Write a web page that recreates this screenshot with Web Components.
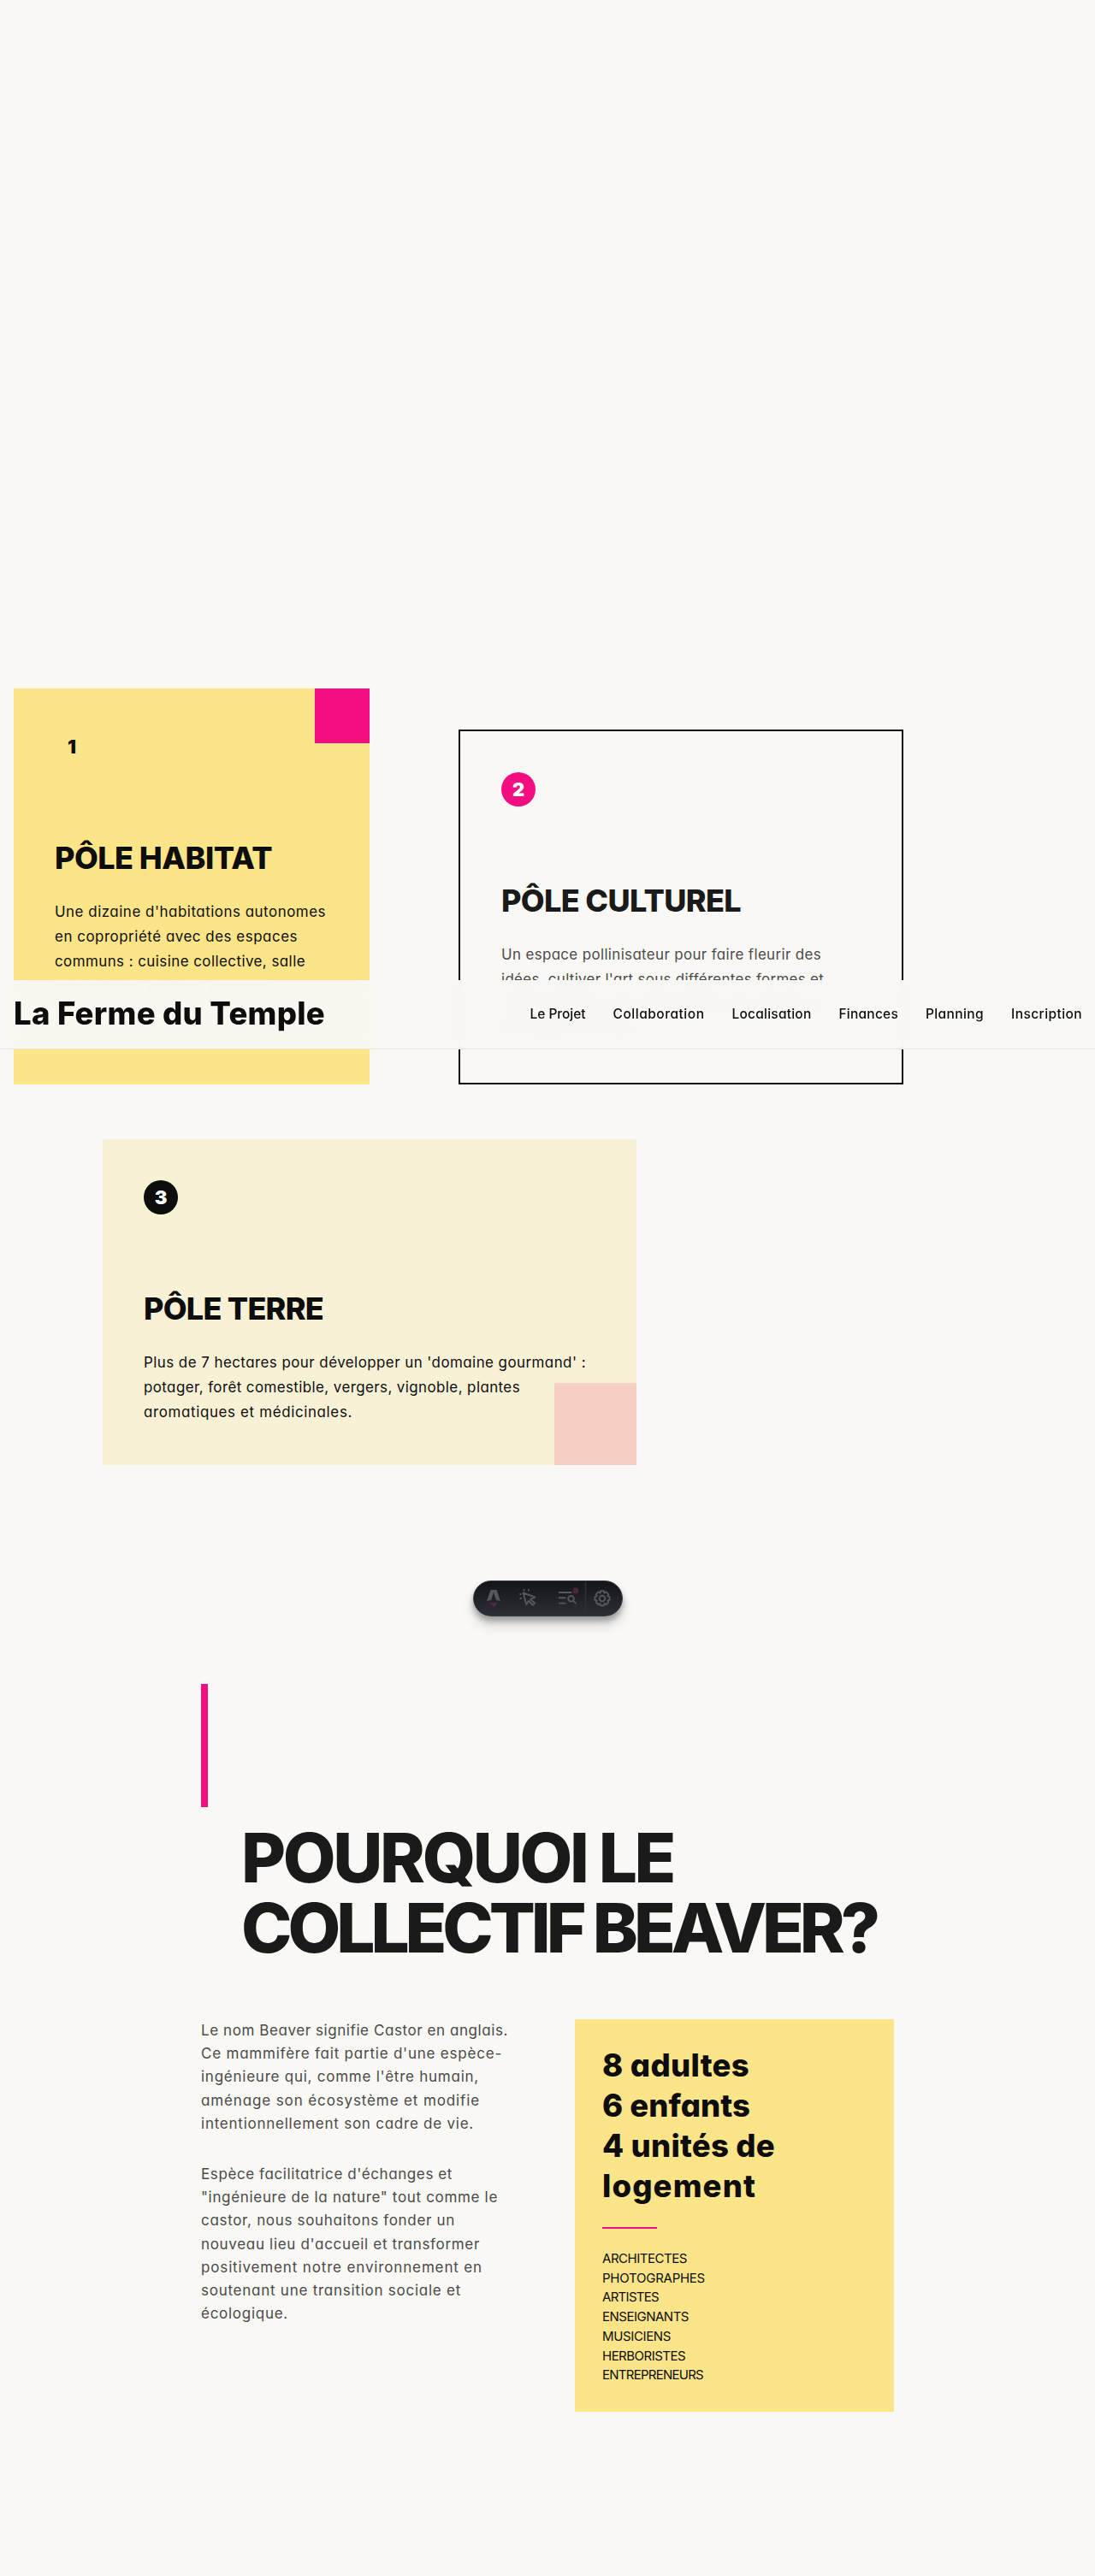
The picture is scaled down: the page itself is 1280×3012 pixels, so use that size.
<!DOCTYPE html>
<html lang="fr">
<head>
<meta charset="utf-8">
<title>La Ferme du Temple</title>
<style>
html,body{margin:0;padding:0}
body{background:#f9f8f4;font-family:Inter,"Liberation Sans",sans-serif;color:#0d0d0d;width:1280px;height:3012px;overflow:hidden}
</style>
</head>
<body>
<ferme-page></ferme-page>
<script>
class FermePage extends HTMLElement{
  connectedCallback(){
    this.attachShadow({mode:'open'}).innerHTML=`
<style>
:host{display:flex;flex-direction:column;position:relative;height:3012px;box-sizing:border-box;padding-top:805px}
.poles{display:grid;grid-template-columns:416px 520px;column-gap:104px;padding-left:16px;height:463px}
pole-card[n="2"]{margin-top:48px}
.last{padding-top:3px}
.terre{margin:64px 0 0 120px;width:624px;height:381px;display:flex}
.terre pole-card{flex:1}
</style>
<div class="poles">
<pole-card n="1" kind="habitat"><fit-line slot="title" w="254">PÔLE HABITAT</fit-line>
<fit-line w="317">Une dizaine d'habitations autonomes</fit-line>
<fit-line w="284">en copropriété avec des espaces</fit-line>
<fit-line w="293">communs : cuisine collective, salle</fit-line>
<fit-line class="last" w="252">polyvalente, ateliers, espaces</fit-line></pole-card>
<pole-card n="2" kind="culturel"><fit-line slot="title" w="280">PÔLE CULTUREL</fit-line>
<fit-line w="374">Un espace pollinisateur pour faire fleurir des</fit-line>
<fit-line w="377">idées, cultiver l'art sous différentes formes et</fit-line>
<fit-line w="378">créer des liens avec le territoire, les artistes et</fit-line>
<fit-line w="158">les habitants locaux.</fit-line></pole-card>
</div>
<div class="terre"><pole-card n="3" kind="terre"><fit-line slot="title" w="210">PÔLE TERRE</fit-line>
<fit-line w="517">Plus de 7 hectares pour développer un 'domaine gourmand' :</fit-line>
<fit-line w="440">potager, forêt comestible, vergers, vignoble, plantes</fit-line>
<fit-line w="244">aromatiques et médicinales.</fit-line></pole-card></div>
<why-section></why-section>
<site-header></site-header>
<dev-toolbar></dev-toolbar>`;
  }
}
class PoleCard extends HTMLElement{
  connectedCallback(){
    this.attachShadow({mode:'open'}).innerHTML=`
<style>
:host{display:flex;flex-direction:column;position:relative;box-sizing:border-box;padding:48px;background:#fce488;color:#0d0d0d}
:host([kind=culturel]){background:none;border:2px solid #0d0d0d;color:#1a1a1a}
:host([kind=terre]){background:#f9f1d6}
.n{width:40px;height:40px;border-radius:50%;display:flex;align-items:center;justify-content:center;font-weight:900;font-size:22px;line-height:40px;color:#0d0d0d}
:host([kind=culturel]) .n{background:#f30d80;color:#fff}
:host([kind=terre]) .n{background:#0d0d0d;color:#fff}
h3{margin:90px 0 29px;font-size:36px;line-height:40px;font-weight:800}
.t{font-size:16.9px;line-height:28.8px;font-feature-settings:"cv11"}
:host([kind=culturel]) .t{color:#4a4a4a}
i{position:absolute;display:none}
:host([kind=habitat]) i{display:block;top:0;right:0;width:64px;height:64px;background:#f30d80}
:host([kind=terre]) i{display:block;bottom:0;right:0;width:96px;height:96px;background:#f8cfc4}
</style>
<i></i><div class="n">${this.getAttribute('n')}</div><h3><slot name="title"></slot></h3><div class="t"><slot></slot></div>`;
  }
}
class WhySection extends HTMLElement{
  connectedCallback(){
    this.attachShadow({mode:'open'}).innerHTML=`
<style>
:host{display:block;padding:256px 0 0 235px}
.bar{width:8px;height:144px;background:#f30d80}
h2{margin:18px 0 0 47px;font-size:80px;line-height:82px;font-weight:800;color:#1a1a1a}
.row{display:grid;grid-template-columns:373px 373px;column-gap:64px;margin-top:66px}
.txt{font-size:17px;line-height:27.2px;color:#4a4a4a;font-feature-settings:"cv11"}
p{margin:0 0 32px}
.box{background:#fce488;height:459px;box-sizing:border-box;padding:30.5px 32px;font-feature-settings:"cv11"}
.big{font-size:36.5px;line-height:47px;font-weight:800}
hr{border:0;margin:24.5px 0 24px;width:64px;height:2px;background:#f30d80}
.list{font-size:15px;line-height:22.7px}
</style>
<div class="bar"></div>
<h2><fit-line w="505">POURQUOI LE</fit-line><fit-line w="742">COLLECTIF BEAVER?</fit-line></h2>
<div class="row"><div class="txt">
<p><fit-line w="359">Le nom Beaver signifie Castor en anglais.</fit-line>
<fit-line w="352">Ce mammifère fait partie d'une espèce-</fit-line>
<fit-line w="325">ingénieure qui, comme l'être humain,</fit-line>
<fit-line w="326">aménage son écosystème et modifie</fit-line>
<fit-line w="319">intentionnellement son cadre de vie.</fit-line></p>
<p><fit-line w="294">Espèce facilitatrice d'échanges et</fit-line>
<fit-line w="347">"ingénieure de la nature" tout comme le</fit-line>
<fit-line w="297">castor, nous souhaitons fonder un</fit-line>
<fit-line w="326">nouveau lieu d'accueil et transformer</fit-line>
<fit-line w="329">positivement notre environnement en</fit-line>
<fit-line w="304">soutenant une transition sociale et</fit-line>
<fit-line w="102">écologique.</fit-line></p></div>
<div class="box"><div class="big"><fit-line w="172">8 adultes</fit-line><fit-line w="173">6 enfants</fit-line><fit-line w="202">4 unités de</fit-line><fit-line w="180">logement</fit-line></div><hr>
<div class="list"><fit-line w="99">ARCHITECTES</fit-line><fit-line w="120">PHOTOGRAPHES</fit-line><fit-line w="66">ARTISTES</fit-line><fit-line w="101">ENSEIGNANTS</fit-line><fit-line w="80">MUSICIENS</fit-line><fit-line w="97">HERBORISTES</fit-line><fit-line w="118">ENTREPRENEURS</fit-line></div></div></div>`;
  }
}
class SiteHeader extends HTMLElement{
  connectedCallback(){
    this.attachShadow({mode:'open'}).innerHTML=`
<style>
:host{position:absolute;left:0;top:1146px;width:1280px;height:81px;box-sizing:border-box;border-bottom:1px solid #e3e2dc;background:rgba(249,248,245,.95);backdrop-filter:blur(8px);display:flex;align-items:center;justify-content:space-between;padding:0 15px 0 16px;z-index:5}
.logo{font-size:36.5px;font-weight:800;line-height:40px;padding-bottom:2px}
nav{display:flex;gap:32px;font-size:15.5px;font-weight:500;line-height:22px;padding-bottom:1px;font-feature-settings:"cv11"}
</style>
<fit-line class="logo" w="364">La Ferme du Temple</fit-line>
<nav><fit-line w="65">Le Projet</fit-line><fit-line w="107">Collaboration</fit-line><fit-line w="93">Localisation</fit-line><fit-line w="69.5">Finances</fit-line><fit-line w="68">Planning</fit-line><fit-line w="83">Inscription</fit-line></nav>`;
  }
}
class DevToolbar extends HTMLElement{
  connectedCallback(){
    this.attachShadow({mode:'open'}).innerHTML=`
<style>
:host{position:absolute;left:552.5px;top:1848px;width:175px;height:42px;z-index:6;display:block;box-sizing:border-box;border-radius:21px;background:linear-gradient(180deg,#13151a,#2d2e34);border:1px solid #343841;box-shadow:0 5px 6px rgba(19,21,26,.3),0 10px 14px rgba(19,21,26,.16)}
svg{display:block;margin:-1px}
</style>
<svg width="175" height="42" viewBox="0.5 0 175 42" fill="none" stroke="#56575c" stroke-width="1.9" stroke-linecap="round" stroke-linejoin="round">
<path d="M21 11h7l4.5 13.3c-2-.9-3.7-1.3-5.3-1.5L24.5 14l-2.7 8.8c-1.7.2-3.5.6-5.3 1.5z" fill="#56575c" stroke="none"/>
<path d="M20.2 25.5c2.5 1.2 5.5 1.2 8 0 .3 2-1.3 3-2 3.7-.7.7-1.2 1-1.3 2-1.3-.7-1.5-1.7-1.5-2.7-2-.3-3-1.3-3.2-3z" fill="#572a50" stroke="none"/>
<path d="M59 14.5l13.700 4.800-5.200 2.900 5.200 4.400-2.400 2.200-4.900-4.800-2.600 4z"/>
<path d="M60.3 11.5l-.3-.6M65.3 11.7l.2-.7M56.3 16.2l-.6-.2M56.5 20.7l-.6.4"/>
<path d="M101.2 14h14M101.2 20.3h7M101.2 26.6h7"/>
<circle cx="115" cy="21.3" r="3.3"/><path d="M117.5 23.7l3 3"/>
<circle cx="120.5" cy="12" r="3.4" fill="#492735" stroke="none"/>
<path d="M132 1v40" stroke="#2c2f37" stroke-width="1.6" stroke-linecap="butt"/>
<circle cx="151.5" cy="21" r="3.3"/>
<path d="M149.6 12.3h3.8l.6 2.3 2.1-1.2 2.7 2.7-1.2 2.1 2.4.7v3.8l-2.4.7 1.2 2.1-2.7 2.7-2.1-1.2-.6 2.3h-3.8l-.6-2.3-2.1 1.2-2.7-2.7 1.2-2.1-2.4-.7v-3.8l2.4-.7-1.2-2.1 2.7-2.7 2.1 1.2z"/>
</svg>`;
  }
}
/* A single line whose tracking is adjusted so that it spans w pixels. */
class FitLine extends HTMLElement{
  connectedCallback(){
    this.attachShadow({mode:'open'}).innerHTML='<style>:host{display:block;width:max-content;white-space:nowrap}</style><slot></slot>';
    const natural=this.getBoundingClientRect().width;
    const w=+this.getAttribute('w');
    this.style.letterSpacing=((w-natural)/this.textContent.length)+'px';
  }
}
customElements.define('ferme-page',FermePage);
customElements.define('pole-card',PoleCard);
customElements.define('why-section',WhySection);
customElements.define('site-header',SiteHeader);
customElements.define('dev-toolbar',DevToolbar);
customElements.define('fit-line',FitLine);
</script>
</body>
</html>
